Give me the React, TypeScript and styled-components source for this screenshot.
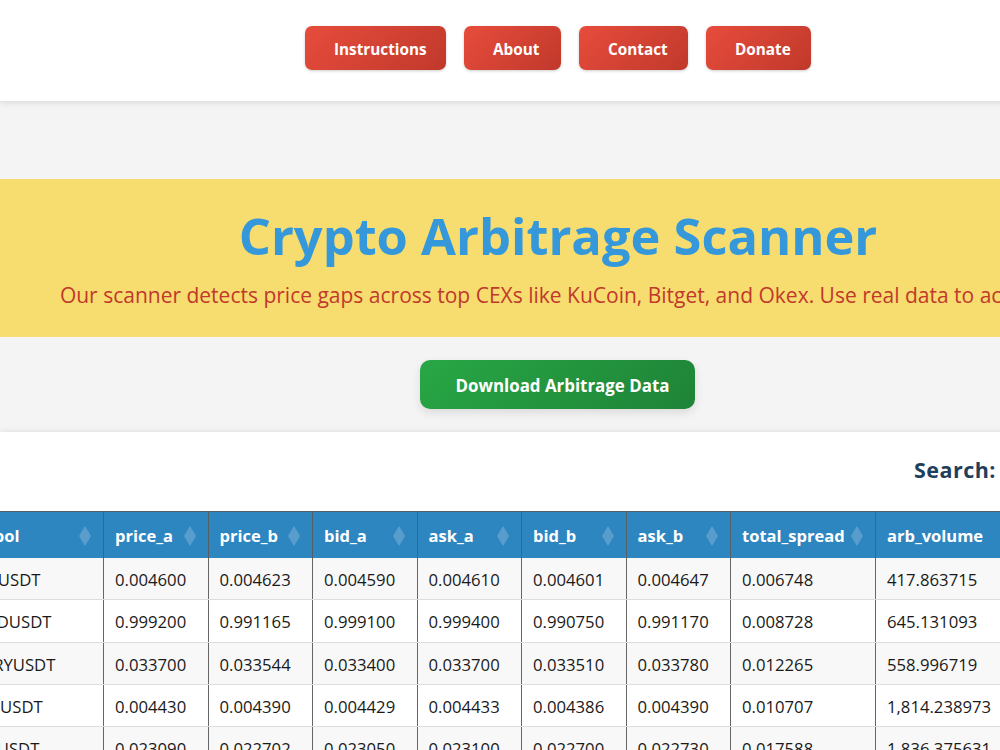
import styled, { createGlobalStyle } from 'styled-components'

const GlobalStyle = createGlobalStyle`
  html, body {
    margin: 0;
    height: 100%;
    overflow: hidden;
    background: #f4f4f4;
  }
  body {
    font-family: "Open Sans", "Noto Sans", "Liberation Sans", sans-serif;
  }
`

const Page = styled.div`
  width: 1116px;
  height: 750px;
  overflow: hidden;
`

const Header = styled.header`
  height: 101px;
  background: #ffffff;
  box-shadow: 0 2px 6px rgba(0, 0, 0, 0.1);
  display: flex;
  justify-content: center;
  padding-top: 26px;
  gap: 18px;
  box-sizing: border-box;
`

const NavButton = styled.a`
  height: 44px;
  display: flex;
  align-items: center;
  padding: 1px 20px 0 29px;
  box-sizing: border-box;
  width: ${props => props.$w}px;
  color: #ffffff;
  font-size: 15.3px;
  font-weight: 700;
  border-radius: 7px;
  white-space: nowrap;
  background: linear-gradient(135deg, #e74c3c, #c0392b);
  box-shadow: 0 1px 3px rgba(0, 0, 0, 0.2);
`

const Banner = styled.section`
  margin-top: 78px;
  height: 158px;
  background: #f7dc6f;
  text-align: center;
  padding-top: 24px;
  box-sizing: border-box;
`

const Title = styled.h1`
  margin: 0;
  color: #3498db;
  font-size: 50.6px;
  line-height: 65px;
  font-weight: 700;
`

const Subtitle = styled.p`
  margin: 12px 0 0;
  color: #c0392b;
  font-size: 21px;
  line-height: 30px;
  white-space: nowrap;
`

const DownloadRow = styled.div`
  display: flex;
  justify-content: center;
  padding: 23px 1px 0 0;
`

const DownloadButton = styled.a`
  width: 275px;
  height: 49px;
  display: flex;
  align-items: center;
  justify-content: center;
  padding: 1px 0 0 10px;
  box-sizing: border-box;
  color: #ffffff;
  font-size: 16.9px;
  font-weight: 700;
  white-space: nowrap;
  border-radius: 10px;
  background: linear-gradient(135deg, #28a745, #1e8337);
  box-shadow: 0 4px 10px rgba(0, 0, 0, 0.1);
`

const Card = styled.section`
  margin-top: 23px;
  background: #ffffff;
  box-shadow: 0 0 6px rgba(0, 0, 0, 0.1);
  height: 320px;
  overflow: hidden;
`

const SearchRow = styled.div`
  height: 79px;
  display: flex;
  justify-content: flex-end;
  align-items: flex-start;
  padding: 23px 120px 0 0;
  box-sizing: border-box;
`

const SearchLabel = styled.label`
  color: #1f3f5c;
  font-size: 21.5px;
  font-weight: 700;
  line-height: 30px;
  letter-spacing: 0.5px;
`

const Table = styled.table`
  table-layout: fixed;
  border-collapse: collapse;
  margin-left: -50px;
  width: 1100px;
  font-size: 16.7px;
  color: #1a1a1a;
  th:first-child, td:first-child {
    padding-left: 9px;
  }
`

const Th = styled.th`
  position: relative;
  width: ${props => props.$w}px;
  height: 46px;
  padding: 1px 11px 0;
  box-sizing: border-box;
  text-align: left;
  color: #ffffff;
  background: #2e86c1;
  font-size: 16.5px;
  font-weight: 700;
  white-space: nowrap;
  border: 1px solid #555f66;
  border-bottom: none;
`

const SortIcon = styled.svg`
  position: absolute;
  right: 12px;
  top: 14px;
  width: 12px;
  height: 20px;
  fill: rgba(255, 255, 255, 0.2);
`

const Row = styled.tr`
  background: ${props => (props.$odd ? '#f8f8f8' : '#ffffff')};
`

const Td = styled.td`
  height: 42.3px;
  padding: 2px 11px 0;
  box-sizing: border-box;
  white-space: nowrap;
  border-left: 1px solid #666666;
  border-right: 1px solid #666666;
  border-bottom: 1px solid #dddddd;
`

const columns = [
  { name: 'symbol', w: 153 },
  { name: 'price_a', w: 104.5 },
  { name: 'price_b', w: 104.5 },
  { name: 'bid_a', w: 104.5 },
  { name: 'ask_a', w: 104.5 },
  { name: 'bid_b', w: 104.5 },
  { name: 'ask_b', w: 104.5 },
  { name: 'total_spread', w: 145 },
  { name: 'arb_volume', w: 175 },
]

const rows = [
  ['NMRUSDT', '0.004600', '0.004623', '0.004590', '0.004610', '0.004601', '0.004647', '0.006748', '417.863715'],
  ['WUSDUSDT', '0.999200', '0.991165', '0.999100', '0.999400', '0.990750', '0.991170', '0.008728', '645.131093'],
  ['HARRYUSDT', '0.033700', '0.033544', '0.033400', '0.033700', '0.033510', '0.033780', '0.012265', '558.996719'],
  ['OMGUSDT', '0.004430', '0.004390', '0.004429', '0.004433', '0.004386', '0.004390', '0.010707', '1,814.238973'],
  ['NMTUSDT', '0.023090', '0.022702', '0.023050', '0.023100', '0.022700', '0.022730', '0.017588', '1,836.375631'],
]

const navItems = [
  { label: 'Instructions', w: 141 },
  { label: 'About', w: 97 },
  { label: 'Contact', w: 109 },
  { label: 'Donate', w: 105 },
]

export default function App() {
  return (
    <Page>
      <GlobalStyle />
      <Header>
        {navItems.map(item => (
          <NavButton key={item.label} $w={item.w}>{item.label}</NavButton>
        ))}
      </Header>

      <Banner>
        <Title>Crypto Arbitrage Scanner</Title>
        <Subtitle>Our scanner detects price gaps across top CEXs like KuCoin, Bitget, and Okex. Use real data to act fast.</Subtitle>
      </Banner>

      <DownloadRow>
        <DownloadButton>Download Arbitrage Data</DownloadButton>
      </DownloadRow>

      <Card>
        <SearchRow>
          <SearchLabel>Search:</SearchLabel>
        </SearchRow>
        <Table>
          <thead>
            <tr>
              {columns.map(col => (
                <Th key={col.name} $w={col.w}>
                  {col.name}
                  <SortIcon viewBox="0 0 12 20">
                    <path d="M6 0 L12 10 L6 20 L0 10 Z" />
                  </SortIcon>
                </Th>
              ))}
            </tr>
          </thead>
          <tbody>
            {rows.map((row, i) => (
              <Row key={row[0]} $odd={i % 2 === 0}>
                {row.map((cell, j) => <Td key={j}>{cell}</Td>)}
              </Row>
            ))}
          </tbody>
        </Table>
      </Card>
    </Page>
  )
}
